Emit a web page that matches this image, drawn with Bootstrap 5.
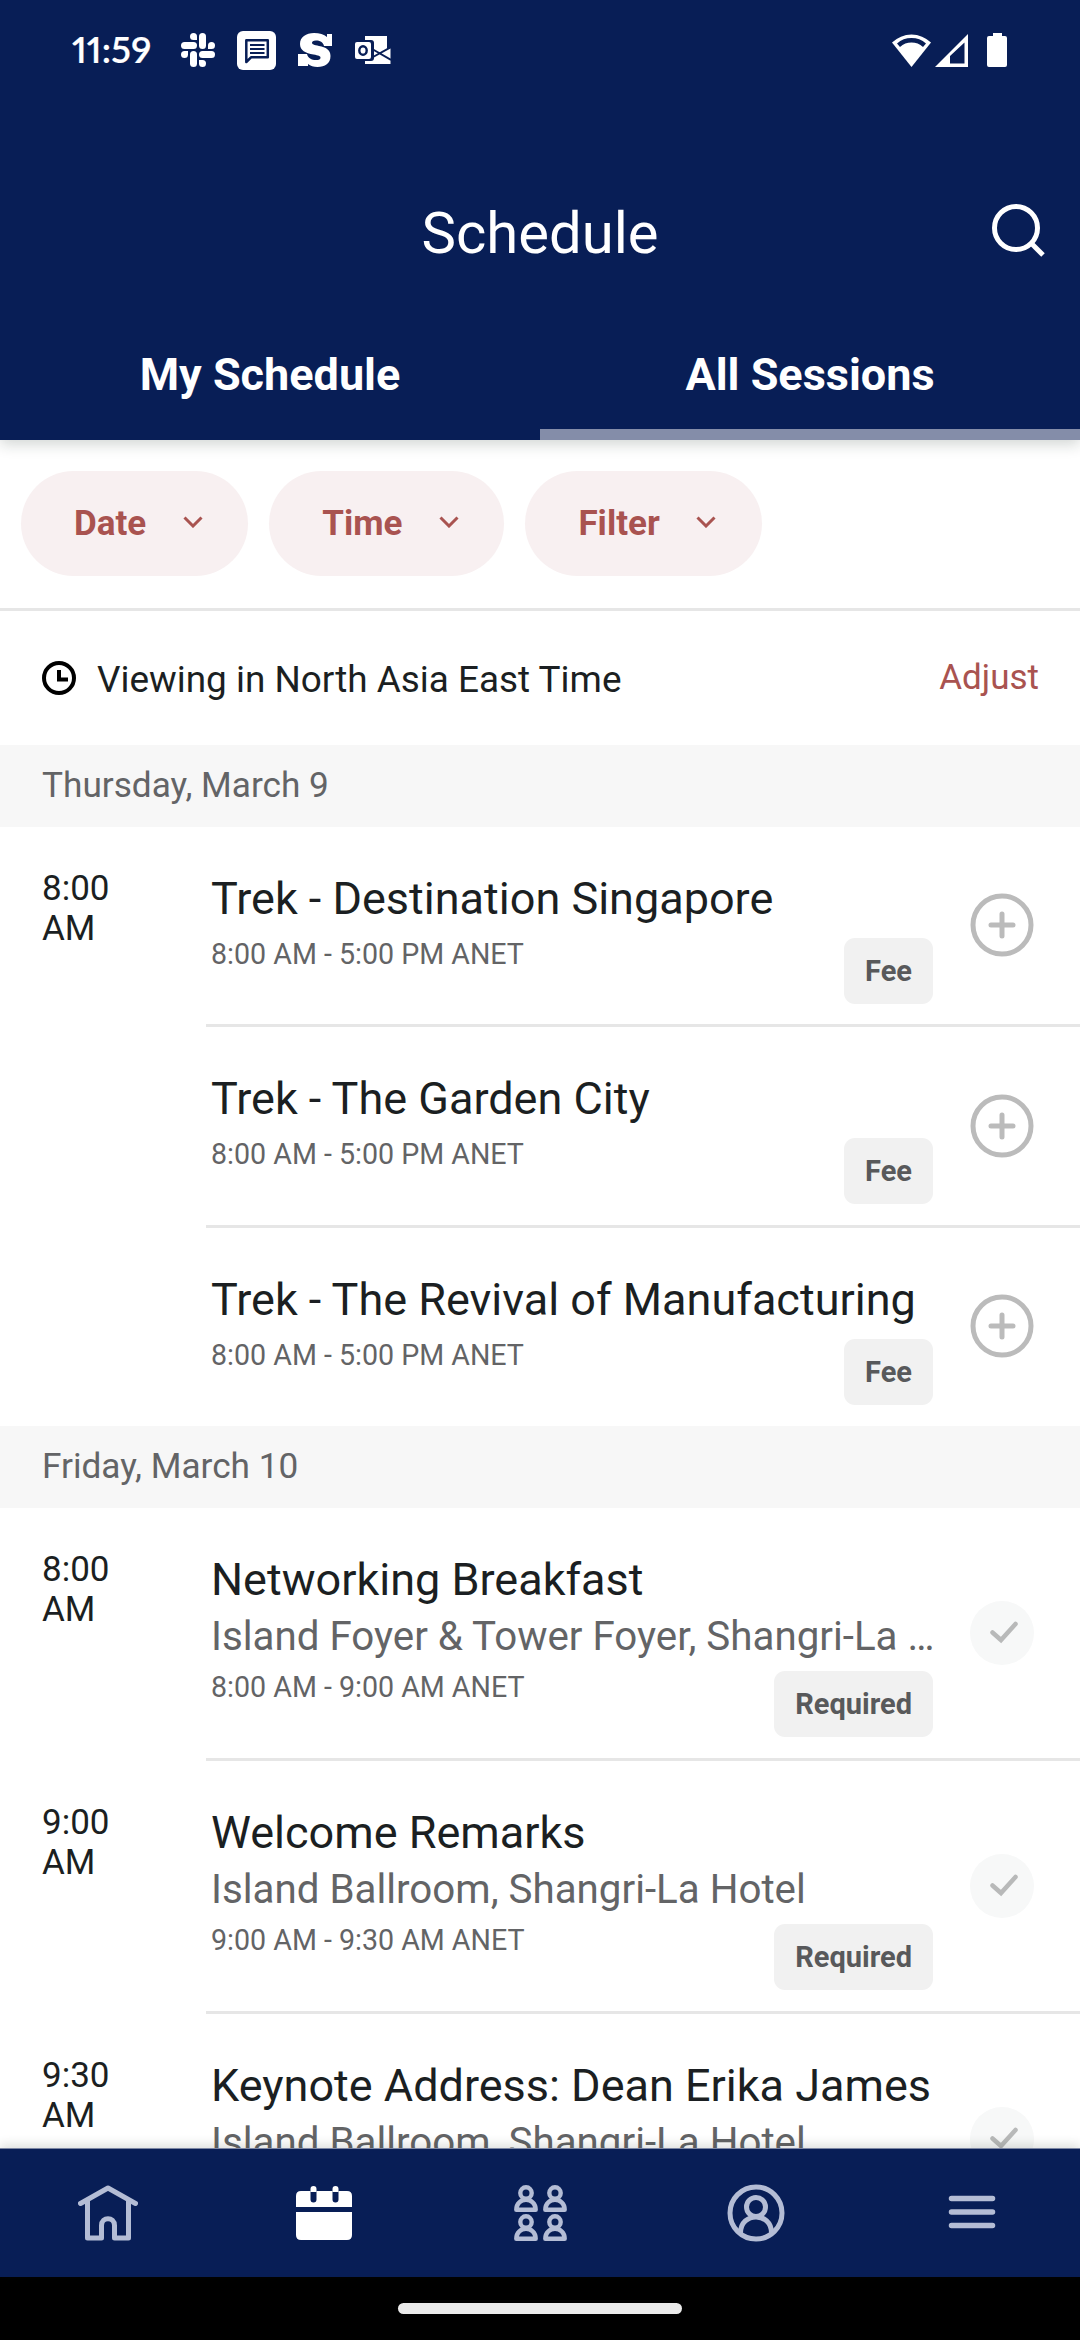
<!DOCTYPE html>
<html lang="en">
<head>
<meta charset="utf-8">
<meta name="viewport" content="width=device-width, initial-scale=1">
<title>Schedule</title>
<link rel="stylesheet" href="https://cdn.jsdelivr.net/npm/bootstrap@5.3.0/dist/css/bootstrap.min.css">
<style>
:root{--navy:#081e56;--rose:#a95350;--ink:#1b1f22;--dim:#636466}
body{font-family:Roboto,sans-serif;color:var(--ink);height:2340px;line-height:1}
svg{display:block;flex:none}
.app-top{background:var(--navy);height:440px;box-shadow:0 4px 14px rgba(20,40,30,.2);z-index:2}
.status{height:100px;padding:0 73px 0 71px}
.clock{font:600 36.5px Lato,sans-serif;font-feature-settings:"pnum";letter-spacing:.1px;width:110px;white-space:nowrap;-webkit-text-stroke:.2px #fff;padding:0 0 2px 1px}
.app-icons{gap:22px}
.title-bar{height:248px;padding-top:98px}
.title-bar h1{font-size:58px;font-weight:400;line-height:70px}
.find{right:35px;top:103px}
.tabs{height:92px}
.tabs a{font-weight:700;font-size:45px;line-height:54px;color:#fff;text-decoration:none}
.tabs a.on{box-shadow:inset 0 -11px #848da9}
.chips{height:170.5px;padding:31px 21px 0;gap:21px;border-bottom:3px solid #e6e6e6}
.chip{height:105px;border:0;border-radius:53px;background:#f8f0f1;color:var(--rose);font-weight:700;font-size:35px;padding:0 45.500px 0 53px;gap:36.500px}
.chip svg{margin-bottom:4px}
.zone{height:134.5px;padding:0 41px 0 42px}
.zone span{font-size:36.9px;line-height:42px;padding-top:4px;margin-left:21px}
.zone a{font-size:35px;line-height:42px;color:var(--rose);text-decoration:none}
.day{height:81.5px;background:#f7f7f7;padding:0 42px;color:var(--dim);font-size:35.2px;line-height:81.5px;margin:0;font-weight:400}
.slot{height:200.5px}
.slot.tall{height:253px}
.slot.last{height:198.5px}
.when{width:206px;padding:42.5px 80px 0 42px;font-size:35px;line-height:40px}
.detail{border-bottom:3px solid #e6e6e6;padding:0 46px 0 5px;gap:37px}
.slot.last .detail{border-color:transparent}
.info{padding-top:45px;width:722px}
.name{font-size:45px;line-height:54px;white-space:nowrap}
.place{font-size:40.3px;line-height:56px;margin-top:2.5px;color:var(--dim)}
.foot{margin-top:12px;font-size:28.6px;line-height:32px;color:var(--dim)}
.tall .foot{margin-top:5.500px}
.tag{height:66px;border-radius:11px;background:#f1f1f1;color:#58595b;font-weight:700;font-size:29px;line-height:67px;padding:0 21px}
.act{padding-top:66.5px}
.tall .act{padding-top:93.5px}
.bottom-nav{background:var(--navy);height:129px;box-shadow:0 -3px 10px rgba(40,50,40,.16);z-index:2;border-top:1px solid #7c86a3}
.bottom-nav a{color:#b4bdd5}
.gesture{height:63px;background:#000}
.gesture i{width:284px;height:11px;border-radius:6px;background:#ebebeb;margin-top:26px}
</style>
</head>
<body class="bg-white overflow-hidden d-flex flex-column">
<svg width="0" height="0" class="position-absolute" aria-hidden="true">
<symbol id="chev" viewBox="0 0 20 12"><path d="M1.500 1.500L10 10l8.500-8.500" fill="none" stroke="#a95350" stroke-width="3"/></symbol>
<symbol id="plus" viewBox="0 0 64 64"><circle cx="32" cy="32" r="29" fill="none" stroke="#bbb" stroke-width="5"/><path d="M32 21v22M21 32h22" stroke="#bbb" stroke-width="5" stroke-linecap="round"/></symbol>
<symbol id="tick" viewBox="0 0 64 64"><circle cx="32" cy="32" r="32" fill="#f7f8f8"/><path d="M22.500 31.500l8.500 7.500L45.500 23" fill="none" stroke="#b8b9b9" stroke-width="4.500" stroke-linecap="round"/></symbol>
<symbol id="pawn" viewBox="0 0 24 27"><circle cx="12" cy="8" r="5.700" fill="none" stroke="currentColor" stroke-width="4.400"/><path d="M2.300 24.700c0-13.200 19.400-13.200 19.400 0z" fill="none" stroke="currentColor" stroke-width="4.400" stroke-linejoin="round"/></symbol>
</svg>

<header class="app-top position-relative flex-shrink-0 text-white">
  <div class="status d-flex align-items-center">
    <span class="clock">11:59</span>
    <div class="app-icons d-flex align-items-center">
      <svg width="34" height="34" viewBox="0 0 34 34" fill="#fff"><g id="arm"><path d="M9 3.500a3.500 3.500 0 0 1 7 0V7h-3.500A3.500 3.500 0 0 1 9 3.500z"/><rect x="0" y="9" width="16" height="7" rx="3.500"/></g><use href="#arm" transform="rotate(90 17 17)"/><use href="#arm" transform="rotate(180 17 17)"/><use href="#arm" transform="rotate(270 17 17)"/></svg>
      <svg width="39" height="39" viewBox="0 0 39 39"><rect width="39" height="39" rx="6" fill="#fff"/><path d="M9.300 31V9.300h21.500v17H14z" fill="none" stroke="#081e56" stroke-width="2.500" stroke-linejoin="round"/><path d="M13 14h14.500M13 18h14.500M13 22h14.500" stroke="#081e56" stroke-width="2"/></svg>
      <svg width="34" height="34" viewBox="0 0 34 34"><path d="M29 4V1h5v12h-8c-1-4-4-5.500-8-5.500-3 0-4 1-4 2.300 0 1.700 2 2.200 7 3.200 7 1.500 11.500 3.500 11.500 10C32.500 30.500 27 34 19.500 34c-4 0-7-1-9.500-3v2H0V21h9c1 4 4.500 6 9 6 3 0 4.500-.8 4.500-2.300 0-1.700-2-2.200-7-3.200C7.500 20 2 17.500 2 11 2 4 8 0 16 0c5.500 0 10 1.500 13 4z" fill="#fff"/></svg>
      <svg width="37" height="30" viewBox="0 0 37 30"><path d="M11 1h22v28H11z" fill="#fff"/><path d="M36.500 13v16H12L20 20z" fill="#fff"/><path d="M19 14.500L37 25M19 22l18-10" stroke="#081e56" stroke-width="2"/><rect x="-1" y="5" width="21" height="21" rx="3" fill="#081e56"/><rect x="1" y="7" width="16" height="17" rx="2" fill="#fff"/><ellipse cx="9" cy="15.500" rx="3.700" ry="4.300" fill="none" stroke="#081e56" stroke-width="2.400"/></svg>
    </div>
    <div class="d-flex align-items-center ms-auto">
      <svg width="39" height="33" viewBox="0 0 39 33"><path d="M0 8.500a28 28 0 0 1 39 0L19.500 33z" fill="#fff"/><path d="M5 9.500a22 22 0 0 1 29 0L31 13a17 17 0 0 0-23 0z" fill="#081e56"/></svg>
      <svg class="ms-1" width="33" height="33" viewBox="0 0 33 33"><path fill-rule="evenodd" d="M33 0v33H0zM29.500 8.500L15 22v7.500h14.500z" fill="#fff"/></svg>
      <svg style="margin-left:19px" width="20" height="34" viewBox="0 0 20 34"><path d="M6 0h9v3h3q2 0 2 2v27q0 2-2 2H2q-2 0-2-2V5q0-2 2-2h4z" fill="#fff"/></svg>
    </div>
  </div>
  <div class="title-bar position-relative text-center"><h1>Schedule</h1>
    <svg class="find position-absolute" width="54" height="54" viewBox="0 0 54 54" fill="none" stroke="#fff" stroke-width="5"><circle cx="25" cy="25" r="21.500"/><path d="M40 40l12 12"/></svg>
  </div>
  <nav class="tabs d-flex text-center"><a class="w-50" href="#">My Schedule</a><a class="w-50 on" href="#">All Sessions</a></nav>
</header>

<main class="flex-fill overflow-hidden" style="min-height:0">
  <div class="chips d-flex">
    <button class="chip d-flex align-items-center">Date<svg width="20" height="12"><use href="#chev"/></svg></button>
    <button class="chip d-flex align-items-center">Time<svg width="20" height="12"><use href="#chev"/></svg></button>
    <button class="chip d-flex align-items-center">Filter<svg width="20" height="12"><use href="#chev"/></svg></button>
  </div>
  <div class="zone d-flex align-items-center">
    <svg width="34" height="34" viewBox="0 0 34 34" fill="none" stroke="#000" stroke-width="4"><circle cx="17" cy="17" r="15"/><path d="M17 9v9.500h9"/></svg>
    <span>Viewing in North Asia East Time</span><a class="ms-auto" href="#">Adjust</a>
  </div>

  <h2 class="day">Thursday, March 9</h2>
  <div class="slot d-flex"><div class="when">8:00 AM</div>
    <div class="detail d-flex flex-fill"><div class="info"><div class="name">Trek - Destination Singapore</div><div class="foot d-flex justify-content-between"><span>8:00 AM - 5:00 PM ANET</span><span class="tag">Fee</span></div></div><div class="act"><svg width="64" height="64"><use href="#plus"/></svg></div></div></div>
  <div class="slot d-flex"><div class="when"></div>
    <div class="detail d-flex flex-fill"><div class="info"><div class="name">Trek - The Garden City</div><div class="foot d-flex justify-content-between"><span>8:00 AM - 5:00 PM ANET</span><span class="tag">Fee</span></div></div><div class="act"><svg width="64" height="64"><use href="#plus"/></svg></div></div></div>
  <div class="slot last d-flex"><div class="when"></div>
    <div class="detail d-flex flex-fill"><div class="info"><div class="name">Trek - The Revival of Manufacturing</div><div class="foot d-flex justify-content-between"><span>8:00 AM - 5:00 PM ANET</span><span class="tag">Fee</span></div></div><div class="act"><svg width="64" height="64"><use href="#plus"/></svg></div></div></div>

  <h2 class="day">Friday, March 10</h2>
  <div class="slot tall d-flex"><div class="when">8:00 AM</div>
    <div class="detail d-flex flex-fill"><div class="info"><div class="name">Networking Breakfast</div><div class="place text-nowrap">Island Foyer &amp; Tower Foyer, Shangri-La …</div><div class="foot d-flex justify-content-between"><span>8:00 AM - 9:00 AM ANET</span><span class="tag">Required</span></div></div><div class="act"><svg width="64" height="64"><use href="#tick"/></svg></div></div></div>
  <div class="slot tall d-flex"><div class="when">9:00 AM</div>
    <div class="detail d-flex flex-fill"><div class="info"><div class="name">Welcome Remarks</div><div class="place text-nowrap">Island Ballroom, Shangri-La Hotel</div><div class="foot d-flex justify-content-between"><span>9:00 AM - 9:30 AM ANET</span><span class="tag">Required</span></div></div><div class="act"><svg width="64" height="64"><use href="#tick"/></svg></div></div></div>
  <div class="slot tall d-flex"><div class="when">9:30 AM</div>
    <div class="detail d-flex flex-fill"><div class="info"><div class="name">Keynote Address: Dean Erika James</div><div class="place text-nowrap">Island Ballroom, Shangri-La Hotel</div></div><div class="act"><svg width="64" height="64"><use href="#tick"/></svg></div></div></div>
</main>

<nav class="bottom-nav position-relative d-flex flex-shrink-0">
  <a class="flex-fill w-100 d-flex align-items-center justify-content-center" href="#" aria-label="Home"><svg width="60" height="56" viewBox="0 0 60 56" fill="none" stroke="currentColor" stroke-width="5" stroke-linecap="round" stroke-linejoin="round"><path d="M2.500 18.500L30 3l27.500 15.500M9.500 16v37h14V40.500c0-9 13-9 13 0V53h14V16"/></svg></a>
  <a class="flex-fill w-100 d-flex align-items-center justify-content-center" href="#" aria-label="Schedule"><svg width="56" height="54" viewBox="0 0 56 54"><path d="M5 5h46q5 0 5 5v11H0V10q0-5 5-5zM0 26h56v23q0 5-5 5H5q-5 0-5-5z" fill="#fff"/><path d="M17.500 5v8.500M39.500 5v8.500" stroke="#081e56" stroke-width="6" stroke-linecap="round"/><path d="M14.500 6V3q0-3 3-3t3 3v3zM36.500 6V3q0-3 3-3t3 3v3z" fill="#fff"/></svg></a>
  <a class="flex-fill w-100 d-flex align-items-center justify-content-center" href="#" aria-label="People"><svg width="53" height="56"><use href="#pawn" width="24" height="27"/><use href="#pawn" x="29" width="24" height="27"/><use href="#pawn" y="29" width="24" height="27"/><use href="#pawn" x="29" y="29" width="24" height="27"/></svg></a>
  <a class="flex-fill w-100 d-flex align-items-center justify-content-center" href="#" aria-label="Profile"><svg width="58" height="58" viewBox="0 0 58 58" fill="none" stroke="currentColor" stroke-width="5"><circle cx="29" cy="29" r="26"/><circle cx="29" cy="23" r="9.500"/><path d="M13.500 49c0-21.500 31-21.500 31 0"/></svg></a>
  <a class="flex-fill w-100 d-flex align-items-center justify-content-center" href="#" aria-label="Menu"><svg width="48" height="36" viewBox="0 0 48 36" stroke="currentColor" stroke-width="5.500" stroke-linecap="round"><path d="M3.500 3.500h41M3.500 17h41M3.500 30.500h41"/></svg></a>
</nav>
<div class="gesture d-flex justify-content-center flex-shrink-0"><i></i></div>
<script src="https://cdn.jsdelivr.net/npm/bootstrap@5.3.0/dist/js/bootstrap.bundle.min.js"></script>
</body>
</html>
